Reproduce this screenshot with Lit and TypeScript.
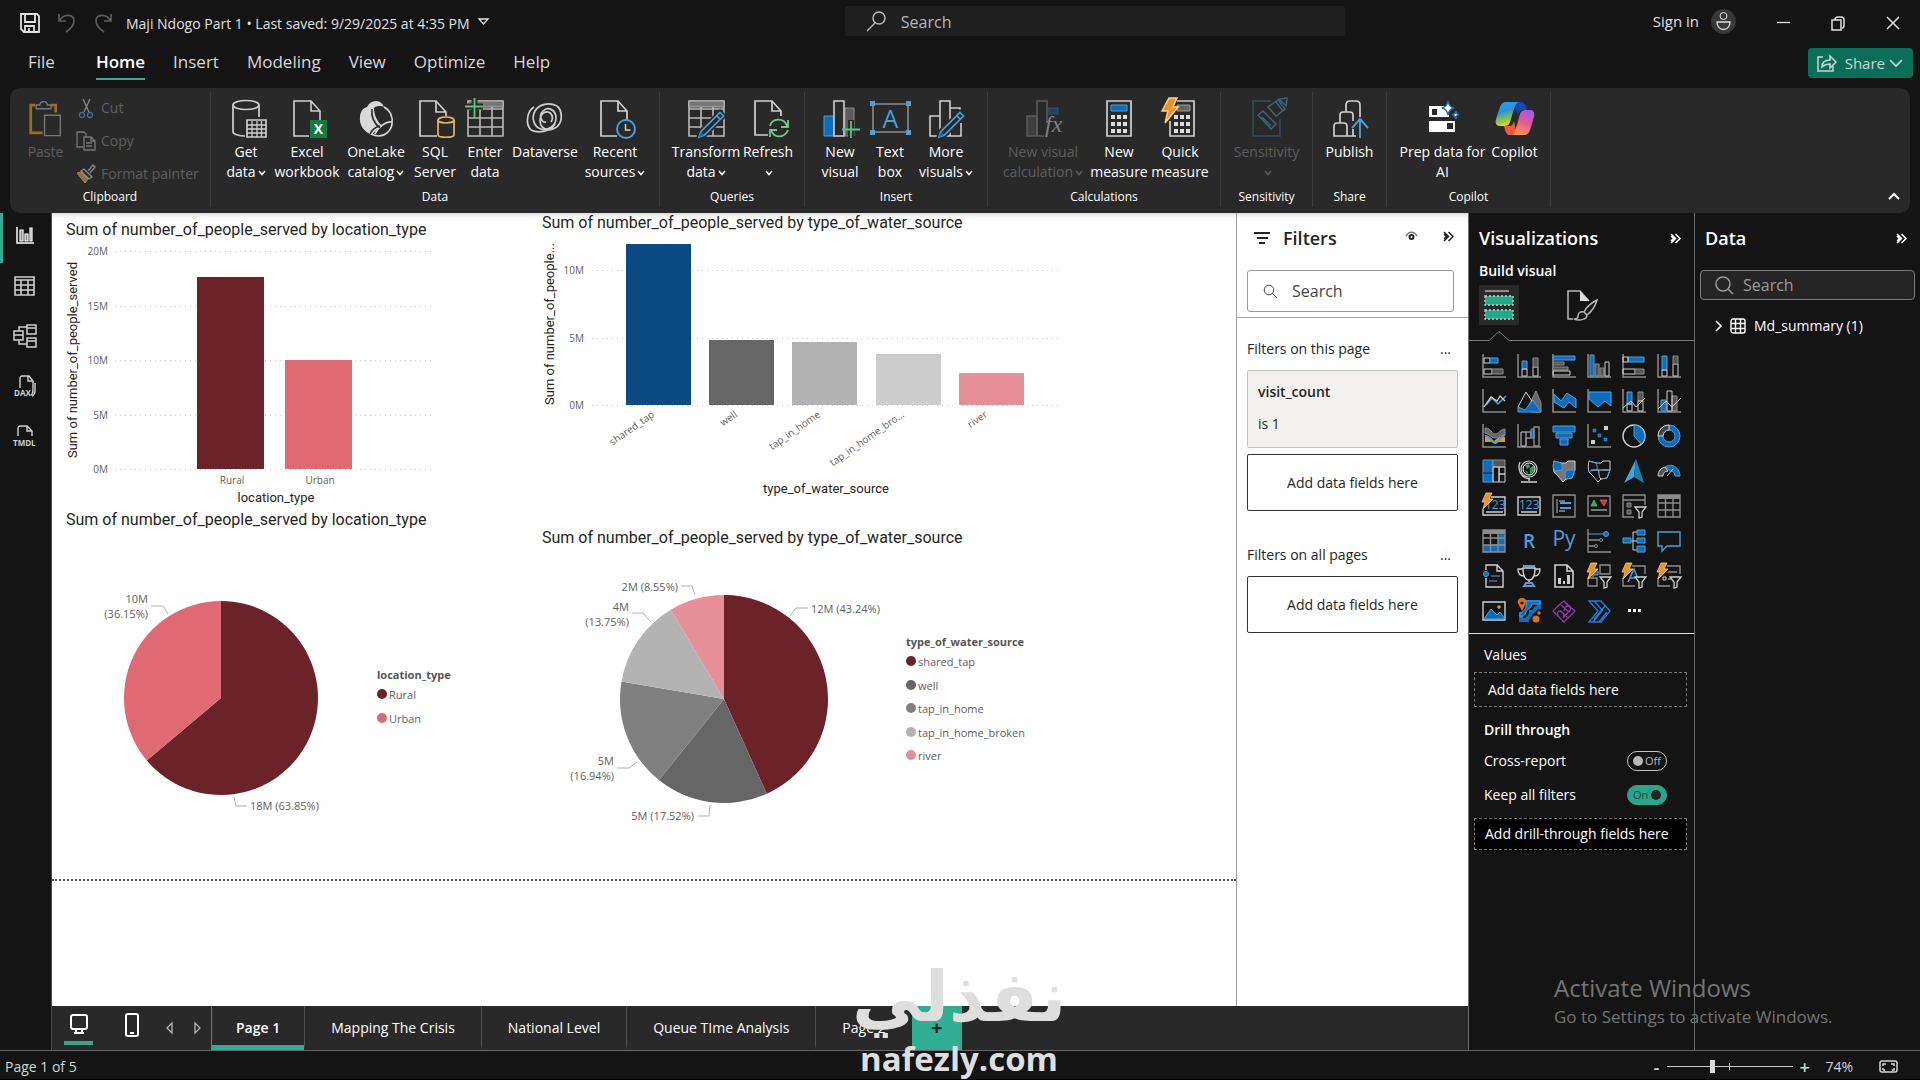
import { LitElement, html, svg, css, TemplateResult, SVGTemplateResult } from "lit";
import { customElement, state } from "lit/decorators.js";
import { classMap } from "lit/directives/class-map.js";

type Glyph = SVGTemplateResult;

const icon = (g: Glyph, w: number, h: number, vb = `0 0 ${w} ${h}`): TemplateResult =>
  html`<svg class="icon" width=${w} height=${h} viewBox=${vb} fill="none" stroke="currentColor" aria-hidden="true">${g}</svg>`;

/* ---------- small interface glyphs ---------- */
const chevronDown = html`<svg class="chev" width="8" height="6" viewBox="0 0 8 6" fill="none" stroke="currentColor" stroke-width="1.5" aria-hidden="true"><path d="M1 1l3 3.5L7 1" /></svg>`;
const doubleChevron = svg`<path stroke-width="1.5" d="M1 1l4.500 4.500L1 10M5.500 1L10 5.500 5.500 10M1 3l2.500 2.500L1 8" />`;
const lens = svg`<circle cx="6" cy="6" r="4.8" /><path d="M9.5 9.5l4.5 4.5" />`;

/* ---------- ribbon glyphs, 40 x 42 ---------- */
const page = svg`<path stroke="#cfcfcf" stroke-width="1.6" d="M22 39H7V4h17l9 10v10M24 4v10h9" />`;
const grid = svg`<path stroke="#b8b8b8" stroke-width="1.6" d="M3 12h35M3 21h35M3 30h35M15 4v35M27 4v35M3 4h35v35H3z" /><path fill="#777" stroke="#b8b8b8" d="M3 4h35v6H3z" />`;
const pencil = svg`<path fill="#292929" stroke="#292929" stroke-width="5" d="M34 15.500l3.500 3.500-19 19-5.500 2 2-5.500z" /><path fill="#292929" stroke="#4a9fdc" stroke-width="1.7" d="M34 15.500l3.500 3.500-19 19-5.500 2 2-5.500zM31 19l3.500 3.500" /><path fill="#0f6cbd" stroke="none" d="M15 35l3 3-5.500 2.500z" />`;

const ribbonGlyphs: Record<string, Glyph> = {
  paste: svg`<path stroke="#96701f" stroke-width="3" d="M10 7H5v30h13M27 7h5v8" /><path stroke="#777" stroke-width="1.500" d="M11 11V7h4c0-5 8-5 8 0h4v4zM20 18h17v22H20z" />`,
  getData: svg`<g stroke="#cfcfcf" stroke-width="1.7"><ellipse cx="20" cy="8" rx="13" ry="4.500" /><path d="M7 8v27c0 2 6 4 12 4M33 8v12" /><path fill="#292929" d="M21 23h19v17H21z" /><path stroke-width="1.300" d="M21 28h19M21 32h19M21 36h19M26 24v16M31 24v16M35.500 24v16" /></g>`,
  excel: svg`${page}<path fill="#107c41" stroke="none" d="M23 23h17v18H23z" /><text x="31.500" y="37" text-anchor="middle" font-size="14" font-weight="700" fill="#fff" stroke="none">X</text>`,
  oneLake: svg`<path fill="#d8d8d8" stroke="none" d="M20 4c4 0 7 3 8 6-3-2-9-1-10 1 0 7 3 13 8 18-5 3-9 7-10 9C8 35 3 28 4 20c0-5 3-9 7-10 2-4 5-6 9-6z" /><path stroke="#d8d8d8" stroke-width="1.700" d="M28 10c7 4 9 11 8 17-1 7-7 12-13 12-3 0-6-1-8-2M36 25c-6-1-14 5-17 12" /><path stroke="#292929" stroke-width="1.600" d="M16 12c-1 8 3 15 8 19M14 37c2-4 5-7 10-8" />`,
  sql: svg`<path stroke="#cfcfcf" stroke-width="1.7" d="M22 39H5V4h16l10 11v4M21 4v11h10" /><g stroke="#e8b55e" fill="#292929" stroke-width="1.700"><path d="M23 23v15c0 3 16 3 16 0V23" /><ellipse cx="31" cy="23" rx="8" ry="3" /></g>`,
  enter: svg`${grid}<path stroke="#292929" stroke-width="6" d="M9.500 0v20M0 9.500h18" /><path stroke="#5fc27d" stroke-width="1.800" d="M9.500 1v20M0 9.500h19" />`,
  dataverse: svg`<g stroke="#cfcfcf" stroke-width="1.700"><path d="M32 9C24 5 14 7 10 14s-1 16 6 18 15-3 15-11-8-12-13-7-1 12 3 11" /><path d="M6 33c8 4 20 1 24-6M32 9c6 5 6 18-2 22-7 4-15 1-15-8 0-5 4-9 8-8s6 6 3 10M6 33C0 27 2 14 9 10" /></g>`,
  recent: svg`<path stroke="#cfcfcf" stroke-width="1.7" d="M22 39H6V4h17l9 10v9M23 4v10h9" /><circle cx="31" cy="32" r="9" fill="#292929" stroke="#4a9fdc" stroke-width="1.900" /><path stroke="#cfcfcf" stroke-width="1.500" d="M30.500 27v6h5" />`,
  transform: svg`${grid}${pencil}`,
  refresh: svg`<path stroke="#cfcfcf" stroke-width="1.7" d="M20 38H7V4h17l9 10v5M24 4v10h9" /><g stroke="#6bcb84" stroke-width="1.800"><path d="M22 29c2-8 14-9 17 0M40 23v7h-7M40 33c-3 8-14 9-17 0M22 40v-7h7" /></g>`,
  newVisual: svg`<path fill="#0f6cbd" stroke="#4a9fdc" d="M4 19h10v20H4z" /><path fill="#5c5c5c" stroke="#8a8a8a" d="M25 11h9v28h-9z" /><path fill="#292929" stroke="#cfcfcf" stroke-width="1.600" d="M14 4h10v35H14z" /><path stroke="#292929" stroke-width="6" d="M31 23v17" /><path stroke="#5fc27d" stroke-width="1.800" d="M31 24v17M22 32.500h18" />`,
  textBox: svg`<path stroke="#8a8a8a" stroke-width="1.600" d="M3 7h35v28H3z" /><path fill="#4a9fdc" stroke="none" d="M0 4h5v5H0zM36 4h5v5h-5zM0 33h5v5H0zM36 33h5v5h-5z" /><text x="20.500" y="31" text-anchor="middle" font-size="25" fill="#4a9fdc" stroke="none">A</text>`,
  moreVisuals: svg`<path stroke="#cfcfcf" stroke-width="1.600" d="M14 39V4h10v35zM14 19H4v20h31V26M24 11h10v8" />${pencil}`,
  visualCalc: svg`<path fill="#404040" stroke="#5c5c5c" stroke-width="1.500" d="M4 19h10v20H4z" /><path stroke="#5c5c5c" stroke-width="1.500" d="M14 39V4h10v22M14 39h7" /><path fill="#24435c" stroke="#2e526d" d="M25 11h10v6H25z" /><text x="22" y="35" font-family="Liberation Serif" font-style="italic" font-size="24" fill="#828282" stroke="none">fx</text>`,
  measure: svg`<path stroke="#cfcfcf" stroke-width="1.700" d="M8 4h24v35H8z" /><path fill="#0f6cbd" stroke="#4a9fdc" d="M12 8h16v6H12z" /><path fill="#ddd" stroke="none" d="M12 18h4v4h-4zM18 18h4v4h-4zM24 18h4v4h-4zM12 25h4v4h-4zM18 25h4v4h-4zM24 25h4v4h-4zM12 32h4v4h-4zM18 32h4v4h-4zM24 32h4v4h-4z" />`,
  quick: svg`<path stroke="#cfcfcf" stroke-width="1.700" d="M17 4h17v35H10V24" /><path fill="#666" stroke="#999" d="M17 8h13v6H17z" /><path fill="#ddd" stroke="none" d="M14 18h4v4h-4zM20 18h4v4h-4zM26 18h4v4h-4zM14 25h4v4h-4zM20 25h4v4h-4zM26 25h4v4h-4zM14 32h4v4h-4zM20 32h4v4h-4zM26 32h4v4h-4z" /><path fill="#e8912d" stroke="#ffd27a" stroke-width="1.500" d="M9 1h8l-4 9h5L5 26l3-12H2z" />`,
  sensitivity: svg`<path stroke="#2f4f60" stroke-width="1.600" d="M24 4H6v35h27V22" /><g stroke="#3f6478" stroke-width="1.500"><path d="M11 18l5-4 13 13-5 5zM15 20l9 9M21 10l8 9 9-7-7-9zM29 5l7 9M32 2l7 7 1-8z" /></g>`,
  publish: svg`<path stroke="#cfcfcf" stroke-width="1.700" d="M16 15V8c0-3 2-4 4-4h6c2 0 4 1 4 4v12M10 26v-8c0-2 1-3 3-3h7c2 0 3 1 3 3v6M4 39V29c0-2 1-3 3-3h7c2 0 3 1 3 3v10zM4 39h22M23 32v7" /><path stroke="#4a9fdc" stroke-width="1.900" d="M30 41V22M22 31l8-9 8 9" />`,
  prep: svg`<path fill="#fff" stroke="none" d="M6 9h20v11H6zM6 24h26v11H6z" /><path fill="#292929" stroke="none" d="M9 12h5v6H9zM24 26h6v6h-6z" /><path fill="#fff" stroke="#1f6ea8" stroke-width="1.500" d="M25 4c1 4 2 6 6 7-4 1-5 3-6 7-1-4-2-6-6-7 4-1 5-3 6-7zM33 14c0 2 1 3 3 4-2 0-3 1-3 4-1-3-2-4-4-4 3-1 4-2 4-4z" />`,
  copilot: svg`<defs>
      <linearGradient id="cpA" x1="0" y1="0" x2="0.300" y2="1"><stop offset="0" stop-color="#19a7ee" /><stop offset="0.450" stop-color="#2f8fe0" /><stop offset="0.750" stop-color="#7cc14a" /><stop offset="1" stop-color="#f3cf2e" /></linearGradient>
      <linearGradient id="cpB" x1="0.700" y1="0" x2="0.300" y2="1"><stop offset="0" stop-color="#a05be8" /><stop offset="0.450" stop-color="#e0559c" /><stop offset="1" stop-color="#ff9b4a" /></linearGradient>
    </defs>
    <path fill="#1646b8" stroke="none" d="M18 5h8c3 0 4 2 5 5l1 3h-4c-3 0-4 2-5 5z" />
    <path fill="#ef5a3c" stroke="none" d="M22 38h-7c-3 0-4-2-5-5l-1-4h5c3 0 4-2 5-5z" />
    <path fill="url(#cpA)" stroke="none" d="M11 5h13c-3 1-4 4-5 7l-4 13c-1 3-3 4-6 4H5c-4 0-5-3-4-7L5 10c1-3 3-5 6-5z" />
    <path fill="url(#cpB)" stroke="none" d="M29 38H17c3-1 3-4 4-7l4-14c1-3 3-4 6-4h4c4 0 5 3 4 7l-4 13c-1 3-3 5-6 5z" />`,
};

interface RibbonItem { glyph: string; lines: string[]; drop?: boolean; off?: boolean; }
interface RibbonGroup { name: string; kind: string; items: RibbonItem[]; }

const ribbon: RibbonGroup[] = [
  { name: "Data", kind: "data", items: [
    { glyph: "getData", lines: ["Get", "data"], drop: true },
    { glyph: "excel", lines: ["Excel", "workbook"] },
    { glyph: "oneLake", lines: ["OneLake", "catalog"], drop: true },
    { glyph: "sql", lines: ["SQL", "Server"] },
    { glyph: "enter", lines: ["Enter", "data"] },
    { glyph: "dataverse", lines: ["Dataverse"] },
    { glyph: "recent", lines: ["Recent", "sources"], drop: true } ] },
  { name: "Queries", kind: "queries", items: [
    { glyph: "transform", lines: ["Transform", "data"], drop: true },
    { glyph: "refresh", lines: ["Refresh", ""], drop: true } ] },
  { name: "Insert", kind: "insert", items: [
    { glyph: "newVisual", lines: ["New", "visual"] },
    { glyph: "textBox", lines: ["Text", "box"] },
    { glyph: "moreVisuals", lines: ["More", "visuals"], drop: true } ] },
  { name: "Calculations", kind: "calc", items: [
    { glyph: "visualCalc", lines: ["New visual", "calculation"], drop: true, off: true },
    { glyph: "measure", lines: ["New", "measure"] },
    { glyph: "quick", lines: ["Quick", "measure"] } ] },
  { name: "Sensitivity", kind: "sens", items: [
    { glyph: "sensitivity", lines: ["Sensitivity", ""], drop: true, off: true } ] },
  { name: "Share", kind: "share", items: [{ glyph: "publish", lines: ["Publish"] }] },
  { name: "Copilot", kind: "copilot", items: [
    { glyph: "prep", lines: ["Prep data for", "AI"] },
    { glyph: "copilot", lines: ["Copilot"] } ] },
];

/* ---------- visual gallery glyphs, 24 x 24 ---------- */
const G = "#8c8c8c", W = "#cfcfcf", B = "#0f6cbd", L = "#4a9fdc", O = "#e8912d";
const axes = svg`<path stroke=${G} stroke-width="1.500" d="M1 0v23h23" />`;
const bolt = svg`<path fill=${O} stroke="#ffd27a" stroke-width="0.800" d="M4 -1h6L7 5h4L1 15l2-7H0z" />`;
const funnelMark = svg`<path fill="#141414" stroke=${W} stroke-width="1.300" d="M13 13h11l-4 5v5l-3 1v-6z" />`;
const tableFrame = svg`<path stroke=${G} stroke-width="1.400" d="M1 1h22v22H1zM1 9h22M1 16h22M8.500 5v18M16 5v18" /><path fill=${G} stroke="none" d="M1 1h22v4H1z" />`;

const gallery: [string, Glyph][] = [
  ["Stacked bar chart", svg`${axes}<path stroke=${W} d="M2 4h6v5H2zM2 15h8v5H2z" /><path fill=${B} stroke=${L} d="M8 4h8v5H8z" /><path fill="#555" stroke=${G} d="M10 15h11v5H10z" />`],
  ["Stacked column chart", svg`${axes}<path fill=${B} stroke=${L} d="M5 7h5v8H5z" /><path stroke=${W} d="M5 15h5v7H5zM16 13h5v9h-5z" /><path fill="#555" stroke=${G} d="M16 4h5v9h-5z" />`],
  ["Clustered bar chart", svg`${axes}<path fill=${B} stroke=${L} d="M1 2h22v4H1z" /><path fill="#555" stroke=${G} d="M1 8h11v3H1zM1 13h15v3H1z" /><path stroke=${W} d="M1 17h17v4H1z" />`],
  ["Clustered column chart", svg`${axes}<path fill=${B} stroke=${L} d="M3 1h4v21H3z" /><path fill="#555" stroke=${G} d="M8 10h4v12H8zM13 14h4v8h-4z" /><path stroke=${W} d="M18 8h4v14h-4z" />`],
  ["100% stacked bar chart", svg`${axes}<path fill=${B} stroke=${L} d="M6 3h16v5H6z" /><path stroke=${W} d="M1 3h5v5H1zM1 15h12v5H1z" /><path fill="#555" stroke=${G} d="M13 15h9v5h-9z" />`],
  ["100% stacked column chart", svg`${axes}<path fill=${B} stroke=${L} d="M5 2h5v14H5z" /><path stroke=${W} d="M5 16h5v6H5zM16 10h5v12h-5z" /><path fill="#555" stroke=${G} d="M16 2h5v8h-5z" />`],
  ["Line chart", svg`${axes}<path stroke=${L} stroke-width="1.500" d="M4 16l6-7 6 6 8-8" /><path stroke=${W} stroke-width="1.300" d="M2 18l7-10 6 4 3-5 5 5" />`],
  ["Area chart", svg`<path fill="#666" stroke=${G} d="M12 16l7-14 5 12v9H14z" /><path stroke=${W} d="M1 18L9 3l9 14" /><path fill=${B} stroke=${L} d="M1 23v-5l7 3 8-10 8 12z" />`],
  ["Stacked area chart", svg`${axes}<path fill=${B} stroke=${L} d="M2 5l7 7 6-8 9 6v9l-7-6-5 6-10-6z" />`],
  ["100% stacked area chart", svg`${axes}<path fill=${B} stroke=${L} d="M2 3h22v14l-6-5-7 6-9-8z" />`],
  ["Line and stacked column chart", svg`${axes}<path fill=${B} stroke=${L} d="M5 3h5v12H5z" /><path fill="#555" stroke=${G} d="M16 3h5v9h-5z" /><path stroke=${W} d="M5 15h5v7H5zM16 12h5v10h-5zM1 19l8-7 5 6 9-9" />`],
  ["Line and clustered column chart", svg`${axes}<path fill=${B} stroke=${L} d="M4 11h5v11H4z" /><path fill="#555" stroke=${G} d="M15 7h5v15h-5z" /><path stroke=${W} d="M10 2h5v20h-5zM1 20l8-8 6 6 9-9" />`],
  ["Ribbon chart", svg`${axes}<path fill="#666" stroke=${G} d="M3 4c7 0 6 6 10 6s4-4 10-5v6c-6 0-6 3-10 3S8 10 3 9z" /><path fill=${O} stroke="none" d="M3 13h5l4 4 5-4h6v5H3z" /><path stroke=${L} stroke-width="2" d="M3 12c6 0 6 7 10 7s5-7 10-8" />`],
  ["Waterfall chart", svg`${axes}<path stroke=${W} d="M4 8h5v14H4z" /><path fill=${B} stroke=${L} d="M14 5h3v9h-3z" /><path stroke=${G} stroke-width="1.400" d="M9 8h5v6H9v8M17 3h5v19h-5z" />`],
  ["Funnel", svg`<path fill=${B} stroke=${L} d="M1 2h22v6H1zM4 9h16v5H4zM8 15h8v6H8z" />`],
  ["Scatter chart", svg`${axes}<path fill=${W} stroke="none" d="M17 2h4v4h-4zM4 16h4v4H4z" /><path fill=${B} stroke=${L} stroke-width="0.500" d="M6 5h3v3H6zM11 10h3v3h-3zM17 14h3v3h-3z" />`],
  ["Pie chart", svg`<circle cx="12" cy="12" r="11" stroke=${W} stroke-width="1.400" /><path fill=${B} stroke=${L} d="M12 1a11 11 0 0 1 7 19l-7-8z" />`],
  ["Donut chart", svg`<circle cx="12" cy="12" r="8.500" stroke=${B} stroke-width="5" /><circle cx="12" cy="12" r="11" stroke=${L} /><circle cx="12" cy="12" r="6" stroke=${L} /><path fill="#444" stroke=${W} d="M1 12A11 11 0 0 1 12 1v5a6 6 0 0 0-6 6z" />`],
  ["Treemap", svg`<path fill=${B} stroke=${L} d="M1 1h10v22H1z" /><path stroke="#141414" d="M1 14h10" /><path fill="#555" stroke=${G} d="M11 1h12v7H11z" /><path stroke=${W} d="M11 8h6v15h-6zM17 8h6v7h-6zM17 15h6v8h-6z" />`],
  ["Map", svg`<circle cx="12" cy="10" r="8" stroke=${W} stroke-width="1.200" /><circle cx="12" cy="10" r="6" fill="#111" /><path fill="#2c9b5c" stroke="none" d="M8 6l4-1 1 3-3 2zM13 9l4-3v7l-4 2zM8 11l3 2-1 3z" /><path stroke=${W} stroke-width="1.300" d="M3 3C0 11 4 19 13 20M12 19v3M4 23h16" />`],
  ["Filled map", svg`<path fill="#777" stroke=${W} d="M2 2l7 2h5l2-2h7v9l-3 8-6 1-3 3-5-6-4-4c-1-4-1-7 0-11z" /><path fill=${B} stroke=${L} d="M2 2l7 2c0 2 2 3 1 7l-7 1c-2-3-2-6-1-10zM15 11h8l-3 8-6 1c-2-1 1-4-1-6z" />`],
  ["Shape map", svg`<path stroke=${W} d="M2 2l7 2h5l2-2h7v9l-3 8-6 1-3 3-5-6-4-4c-1-4-1-7 0-11zM4 11h19M11 11c2 3 0 6 3 9" /><path stroke=${L} d="M2 2l7 2c0 2 2 3 1 7l-7 1M15 11h8l-3 8-6 1" />`],
  ["Azure map", svg`<path fill="#3ea8d8" stroke="none" d="M14 0L2 24l10-6z" /><path fill="#1b7fb3" stroke="none" d="M14 0l8 24-10-6z" />`],
  ["Gauge", svg`<path fill=${B} stroke=${L} d="M8 8c8-5 15 2 15 9h-5c0-3-2-5-5-5z" /><path fill="#555" stroke=${W} d="M1 17C1 12 4 9 8 8l3 4c-3 0-5 2-5 5zM10 17l6-7" />`],
  ["Card (new)", svg`<path stroke=${W} stroke-width="1.400" d="M9 3h14v18H1v-6M4 18h17" /><text x="3" y="15" font-size="12" fill=${L} stroke="none">123</text>${bolt}`],
  ["Card", svg`<path stroke=${W} stroke-width="1.400" d="M1 3h22v18H1zM4 18h16" /><text x="2" y="15" font-size="12" fill=${L} stroke="none">123</text>`],
  ["Multi-row card", svg`<path stroke=${G} stroke-width="1.400" d="M1 1h22v22H1zM5 5v14M7 17h6M7 7h6" /><path stroke=${L} stroke-width="1.800" d="M8 9h11M8 14h11" />`],
  ["KPI", svg`<path stroke=${G} stroke-width="1.400" d="M1 2h22v20H1z" /><path fill="#2fae62" stroke="#6bcb84" stroke-width="0.600" d="M4 12l3-6 3 6z" /><path fill="#d13438" stroke="#f07070" stroke-width="0.600" d="M13 6h7l-3 6z" /><path stroke="#777" stroke-width="2" d="M4 16h16" />`],
  ["Slicer", svg`<path stroke=${G} stroke-width="1.400" d="M12 23H1V1h22v10M1 6h22" /><path fill="#555" stroke=${G} d="M5 9h4v4H5zM5 16h4v4H5z" />${funnelMark}`],
  ["Table", tableFrame],
  ["Matrix", svg`<path fill=${B} stroke="none" d="M16 5h7v18H1v-7h15z" /><path stroke=${L} d="M8.500 16h15M16 9h7" />${tableFrame}`],
  ["R script visual", svg`<text x="12" y="19" text-anchor="middle" font-size="19" font-weight="600" fill=${L} stroke="none">R</text>`],
  ["Python visual", svg`<text x="12" y="17" text-anchor="middle" font-size="21" font-weight="500" fill=${L} stroke="none">Py</text>`],
  ["Key influencers", svg`<path stroke=${G} stroke-width="1.400" d="M1 0v23h23M1 11h11M1 17h7" /><path stroke=${L} d="M1 5h15" /><circle cx="19" cy="5" r="2.500" fill=${B} stroke=${L} /><circle cx="14" cy="11" r="1.500" stroke=${G} /><circle cx="9" cy="17" r="1.500" stroke=${G} />`],
  ["Decomposition tree", svg`<path stroke=${W} d="M8 12h7M11 3v18M11 3h4M11 21h4" /><path fill=${B} stroke=${L} d="M1 9h8v5H1zM15 1h8v5h-8zM15 9h8v5h-8zM15 17h8v6h-8z" />`],
  ["Q&A", svg`<path stroke=${L} stroke-width="1.400" d="M1 3h22v14H10l-5 5v-5H1z" />`],
  ["Narrative", svg`<path stroke=${W} stroke-width="1.400" d="M4 6V1h11l6 6v16H4v-9M15 1v6h6" /><circle cx="4" cy="10" r="2.500" stroke=${L} fill=${B} /><path stroke=${L} d="M9 12h9M7 17h8" />`],
  ["Metrics", svg`<path stroke=${W} stroke-width="1.400" d="M6 4h12c0 8-2 12-6 12S6 12 6 4zM6 5H1c0 5 2 7 6 7M18 5h5c0 5-2 7-6 7M12 16v3" /><path stroke=${L} stroke-width="2" d="M6 2h12M7 22h10l-2-3H9z" />`],
  ["Paginated report", svg`<path stroke=${W} stroke-width="1.600" d="M3 1h12l6 6v16H3zM15 1v6h6" /><path fill=${W} stroke="none" d="M6 14h3v6H6zM11 17h2v3h-2zM15 11h3v9h-3z" />`],
  ["Button slicer", svg`<path stroke=${G} stroke-width="1.400" d="M13 1h10v9H13zM1 14v8h9v-8zM10 10h-4v3" /><path fill=${B} stroke=${L} d="M7 7h4v4H7z" />${bolt}${funnelMark}`],
  ["Text slicer", svg`<path stroke=${G} stroke-width="1.400" d="M10 2h13v8M1 14v8h12" /><path stroke=${L} stroke-width="1.500" d="M6 18l6-13 5 12M8 14h5" />${bolt}${funnelMark}`],
  ["List slicer", svg`<path stroke=${G} stroke-width="1.400" d="M10 2h13v8M1 14v8h12M11 8h9M11 15h3" /><path stroke=${W} d="M6 13h3v3H6z" />${bolt}${funnelMark}`],
  ["Image", svg`<path stroke=${W} stroke-width="1.400" d="M1 3h22v18H1z" /><path fill=${B} stroke=${L} d="M2 20l7-10 6 6 3-3 5 7z" /><circle cx="17" cy="8" r="1.800" fill=${O} stroke="none" />`],
  ["ArcGIS map", svg`<path fill="#141414" stroke=${B} stroke-width="4" d="M9 3h13v5c-5 0-3 5-8 5 0 5-3 4-4 8H4v-8" /><path fill=${B} stroke=${L} d="M9 2h14v3h-8c-1 5-4 4-6 8-1 4-3 4-6 5v-4c3-1 6-4 6-6z" /><path fill="#e07010" stroke="none" d="M5-1c3 0 5 2 4 5l-4 8-4-8c-1-3 1-5 4-5z" /><circle cx="5" cy="4" r="1.600" fill="#141414" stroke="none" /><circle cx="19" cy="20" r="3.500" fill="#e07010" stroke="none" /><circle cx="22" cy="14" r="1.800" fill="#e07010" stroke="none" />`],
  ["Power Apps", svg`<path stroke="#8b3aa0" stroke-width="1.300" d="M8 5l4-3 11 10-7 7-4 4L1 12zM8 5l9 8c3-3 1-6-1-6s-4 2-4 5M7 18c-3-3-1-6 1-6s4 3 4 6l5-6M12 23l4-4-5-5M16 7l-4-5" />`],
  ["Power Automate", svg`<path stroke="#1f7ad6" stroke-width="1.400" d="M2 2h12l9 10-9 11H2l9-11zM7 2l9 10M6 23l9-11M18 7L7 20M12 23l8-10" />`],
  ["Get more visuals", svg`<path fill="#fff" stroke="none" d="M6 10h3v3H6zM11 10h3v3h-3zM16 10h3v3h-3z" />`],
];

/* ---------- report data ---------- */
const locationBars = [
  { name: "Rural", value: 17.65, fill: "#6b2229" },
  { name: "Urban", value: 10.01, fill: "#e06a74" },
];
const sourceBars = [
  { name: "shared_tap", value: 11.95, fill: "#0b4a82" },
  { name: "well", value: 4.85, fill: "#666666" },
  { name: "tap_in_home", value: 4.68, fill: "#b3b3b3" },
  { name: "tap_in_home_bro...", value: 3.8, fill: "#cccccc" },
  { name: "river", value: 2.37, fill: "#e68f96" },
];
interface Slice { share: number; fill: string; }
const locationSlices: Slice[] = [
  { share: 0.6385, fill: "#6b2229" },
  { share: 0.3615, fill: "#e06a74" },
];
const sourceSlices: Slice[] = [
  { share: 0.4324, fill: "#6b2229" },
  { share: 0.1752, fill: "#666666" },
  { share: 0.1694, fill: "#808080" },
  { share: 0.1375, fill: "#b3b3b3" },
  { share: 0.0855, fill: "#e68f96" },
];

function pie(cx: number, cy: number, r: number, slices: Slice[]) {
  let at = 0;
  return slices.map((s) => {
    const a = at * 2 * Math.PI;
    at += s.share;
    const b = at * 2 * Math.PI;
    const big = s.share > 0.5 ? 1 : 0;
    const d = `M${cx} ${cy}L${cx + r * Math.sin(a)} ${cy - r * Math.cos(a)}A${r} ${r} 0 ${big} 1 ${cx + r * Math.sin(b)} ${cy - r * Math.cos(b)}Z`;
    return svg`<path d=${d} fill=${s.fill} />`;
  });
}

const legend = (x: number, y: number, title: string, rows: [string, string][]) => svg`
  <text class="legend-title" x=${x} y=${y}>${title}</text>
  ${rows.map(([name, fill], i) => svg`
    <circle cx=${x + 5} cy=${Math.round(y + 15 + i * 23.5)} r="5" fill=${fill} />
    <text class="legend" x=${x + 12} y=${Math.round(y + 20 + i * 23.5)}>${name}</text>`)}`;

@customElement("app-root")
export class AppRoot extends LitElement {
  @state() private menu = "Home";
  @state() private current = "Page 1";

  static styles = css`
    :host {
      display: flex;
      flex-direction: column;
      min-height: 100vh;
      position: relative;
      overflow: hidden;
      background: #141414;
      color: #fff;
      font-family: "Open Sans", "Noto Sans", sans-serif;
      font-size: 14px;
      line-height: 20px;
    }
    * { box-sizing: border-box; }
    button, input { font: inherit; color: inherit; }
    button { background: none; border: 0; padding: 0; margin: 0; }
    h2, h3, p, figure, ul { margin: 0; padding: 0; }
    h2 { font-size: 18px; line-height: 24px; font-weight: 600; }
    h3 { font-size: 14px; line-height: 20px; font-weight: 600; }
    .icon { display: block; overflow: visible; flex: none; }
    input::placeholder { color: inherit; opacity: 1; }

    .titlebar { display: grid; grid-template-columns: 44% 500px 1fr; height: 42px; color: #e0e0e0; }
    .quick { display: flex; align-items: center; padding: 4px 0 0 20px; gap: 18px; }
    .quick .dim { color: #5e5e5e; }
    .doc { display: flex; align-items: center; gap: 8px; margin-left: -4px; padding-top: 2px; }
    .top-search { display: flex; align-items: center; gap: 15px; margin: 6px 0; padding-left: 21px; background: #1f1f1f; border-radius: 2px; font-size: 16px; color: #b8b8b8; }
    .top-search input { flex: 1; min-width: 0; border: 0; background: none; outline: 0; padding: 2px 0 0; }
    .window { display: flex; justify-content: flex-end; align-items: center; padding-right: 20px; }
    .signin { display: flex; align-items: center; gap: 12px; margin-right: 41px; font-size: 15px; }
    .controls { display: flex; gap: 41px; padding-top: 3px; }

    .menubar { display: flex; height: 46px; padding: 0 7px 0 28px; align-items: flex-start; }
    .menubar nav { display: flex; gap: 28px; flex: 1; }
    .menu { height: 38px; font-size: 17px; color: #d8d8d8; padding: 4px 0 0; border-bottom: 2px solid transparent; }
    .menu:first-child { margin-right: 13px; }
    .menu.on { color: #fff; font-weight: 600; border-color: #2fae93; }
    .share { display: flex; align-items: center; height: 30px; margin-top: 6px; padding: 0 10px 0 9px; gap: 4px; background: #0b6e59; border-radius: 4px; color: #c9d6d2; font-size: 15px; }
    .share span { padding-left: 5px; }

    .ribbon { display: flex; position: relative; margin: 0 10px; height: 125px; background: #292929; border-radius: 10px; }
    .group { display: flex; flex-direction: column; justify-content: space-between; align-items: center; margin: 4px 0 6px; border-right: 1px solid #3d3d3d; flex: none; }
    .group-name { font-size: 12px; line-height: 20px; font-weight: 400; }
    .items { display: grid; justify-content: center; padding-top: 5px; }
    .group.clip { width: 201px; }
    .group.data { width: 449px; }
    .group.queries { width: 145px; }
    .group.insert { width: 183px; }
    .group.calc { width: 233px; }
    .group.sens { width: 92px; }
    .group.share-g { width: 74px; }
    .group.copilot { width: 164px; }
    .data .items { grid-template-columns: 48px 74px 64px 54px 46px 74px 66px; }
    .queries .items { grid-template-columns: 72px 52px; }
    .insert .items { grid-template-columns: 50px 50px 62px; }
    .calc .items { grid-template-columns: 92px 60px 62px; }
    .sens .items { grid-template-columns: 76px; }
    .share-g .items { grid-template-columns: 56px; }
    .copilot .items { grid-template-columns: 92px 52px; }
    .tool { display: flex; flex-direction: column; align-items: center; white-space: nowrap; }
    .tool .icon { margin-bottom: 3px; }
    .tool.off { color: #5e5e5e; }
    .tool .chev { margin-left: 2px; vertical-align: 1px; }
    .clip-body { display: flex; width: 100%; padding: 5px 0 0 17px; gap: 12px; color: #5e5e5e; }
    .clip-list { display: flex; flex-direction: column; gap: 13px; padding-top: 1px; }
    .clip-list button { display: flex; align-items: center; gap: 5px; white-space: nowrap; }
    .collapse { position: absolute; right: 10px; bottom: 13px; }

    .work { display: flex; flex: 1; min-height: 0; }
    .rail { width: 51px; display: flex; flex-direction: column; flex: none; color: #cfcfcf; }
    .rail button { height: 50px; display: grid; place-items: center; border-left: 3px solid transparent; padding: 0 5px 4px 0; }
    .rail button.on { border-color: #2fae93; color: #fff; }
    .center { flex: 1; min-width: 0; display: flex; flex-direction: column; border-left: 1px solid #4a4a4a; }
    .stage { flex: 1; display: flex; background: #fff; color: #252423; }
    .canvas { flex: 1; min-width: 0; position: relative; overflow: hidden; min-height: 792px; box-shadow: inset 0 6px 5px -5px #c8c8c8; }
    .canvas figure { position: absolute; }
    .canvas svg { display: block; }
    .v1 { left: 8px; top: 7px; }
    .v2 { left: 484px; top: 0; }
    .v3 { left: 8px; top: 297px; }
    .v4 { left: 484px; top: 315px; }
    figcaption { padding-left: 6px; font-family: Roboto, sans-serif; font-size: 16px; line-height: 20px; white-space: nowrap; }
    .page-edge { position: absolute; left: 0; right: 0; top: 666px; border-top: 2px dotted #555; }
    .axis, .label { font-family: "Open Sans", sans-serif; fill: #605e5c; }
    .axis { font-size: 10px; }
    .label, .legend { font-size: 11px; fill: #605e5c; }
    .legend-title { font-size: 11px; font-weight: 700; fill: #555; }
    .axis-title { font-family: Roboto, sans-serif; font-size: 13px; fill: #252423; }
    .end { text-anchor: end; }
    .mid { text-anchor: middle; }
    .gridline { stroke: #c8c8c8; stroke-dasharray: 1 4; }
    .leader { fill: none; stroke: #b0b0b0; }

    .filters { width: 232px; flex: none; border-left: 1px solid #a0a0a0; box-shadow: inset 0 6px 5px -5px #c8c8c8; }
    .filters-head { padding: 13px 14px 0 10px; height: 105px; border-bottom: 1px solid #a0a0a0; }
    .head-row { display: flex; align-items: center; }
    .filters .head-row { padding-left: 7px; gap: 13px; }
    .filters .head-row h2 { flex: 1; }
    .filters .head-row .eye { margin-right: 12px; }
    .filters .head-row button { margin-bottom: 4px; }
    .filter-search { display: flex; align-items: center; gap: 14px; height: 42px; margin-top: 20px; padding-left: 15px; border: 1px solid #999; border-radius: 3px; font-size: 16px; color: #444; }
    .filter-search input { border: 0; outline: 0; width: 130px; padding: 0; background: none; }
    .filter-set { padding: 21px 10px 0; }
    .set-row { display: flex; justify-content: space-between; align-items: flex-start; height: 31px; padding-right: 7px; }
    .card { height: 78px; padding: 11px 10px; display: flex; flex-direction: column; gap: 12px; background: #f3f1ef; border: 1px solid #c4c2c0; border-radius: 2px; margin-bottom: 6px; }
    .drop { width: 100%; height: 57px; border: 1px solid #333; border-radius: 2px; display: grid; place-items: center; margin-bottom: 13px; }

    .pagebar { display: flex; height: 44px; background: #292929; }
    .views { display: flex; width: 159px; align-items: stretch; flex: none; padding-left: 12px; }
    .views button { display: flex; flex-direction: column; align-items: center; padding-top: 8px; }
    .views .desk { width: 30px; border-bottom: 4px solid #3aa58c; margin-bottom: 5px; }
    .views .phone { width: 28px; margin-left: 25px; padding-top: 7px; }
    .views .step { width: 28px; padding-top: 16px; color: #b8b8b8; }
    .views .step.first { margin-left: 10px; }
    .tab { padding: 5px 26px 0; border-left: 1px solid #4f4f4f; border-bottom: 5px solid transparent; }
    .tab.on { padding: 5px 24px 0; border-bottom-color: #2fae93; border-left-color: #777; font-weight: 600; }
    .add { width: 50px; background: #2fae93; color: #292929; font-size: 20px; font-weight: 700; }

    .pane { width: 226px; flex: none; border-left: 1px solid #6e6e6e; display: flex; flex-direction: column; }
    .pane > .head-row { justify-content: space-between; padding: 13px 13px 0 10px; }
    .build { padding: 11px 10px 0; }
    .modes { display: flex; gap: 43px; margin: 4px 0 5px; }
    .modes button { width: 40px; height: 40px; display: grid; place-items: center; }
    .modes .on { background: #292929; }
    .caret { display: block; width: 100%; height: 11px; }
    .gallery { display: grid; grid-template-columns: repeat(6, 24px); gap: 11px; padding: 13px 13px 10px; border-bottom: 1px solid #e0e0e0; }
    .gallery button { height: 24px; }
    .wells { padding: 11px 7px 0 5px; }
    .wells h3, .wells .name, .row { padding-left: 10px; }
    .well { display: block; width: 100%; height: 35px; margin: 7px 0 13px; padding: 0 13px; text-align: left; border: 1px dashed #777; }
    .well.black { background: #000; height: 32px; margin: 6px 0 0; padding: 0 10px; }
    .row { display: flex; justify-content: space-between; align-items: center; padding-right: 20px; height: 34px; }
    h3 + .row { margin-top: 4px; }
    .switch { display: flex; align-items: center; width: 40px; height: 20px; padding: 0 5px; justify-content: space-between; border: 1px solid #c4c4c4; border-radius: 10px; font-size: 11px; color: #b8b8b8; }
    .switch input { appearance: none; width: 10px; height: 10px; margin: 0; border-radius: 5px; background: #b8b8b8; }
    .switch.yes { flex-direction: row-reverse; background: #2aa58b; border-color: #2aa58b; color: #134a40; }
    .switch.yes input { background: #242424; }

    .data-search { display: flex; align-items: center; gap: 9px; margin: 20px 5px 0; height: 30px; padding-left: 14px; border: 1px solid #7e7e7e; border-radius: 4px; background: #242424; font-size: 16px; color: #9a9a9a; }
    .data-search input { border: 0; outline: 0; width: 150px; padding: 0; background: none; }
    .tree { display: flex; align-items: center; gap: 8px; margin: 16px 0 0 20px; text-align: left; }

    .status { display: flex; align-items: center; height: 30px; padding: 2px 22px 0 5px; border-top: 1px solid #666; box-shadow: inset 0 -1px 0 #000; color: #d4d4d4; }
    .status > span:first-child { flex: 1; }
    .zoom { display: flex; align-items: center; gap: 6px; margin-right: 16px; }
    .zoom button { width: 10px; font-size: 18px; font-weight: 600; }
    .zoom input { appearance: none; width: 126px; height: 14px; margin: 0; background: linear-gradient(#c8c8c8, #c8c8c8) 62px 50% / 1px 7px no-repeat, linear-gradient(#c8c8c8, #c8c8c8) 0 50% / 100% 1px no-repeat; }
    .zoom input::-webkit-slider-thumb { appearance: none; width: 5px; height: 13px; background: #d8d8d8; }
    .pct { margin-right: 26px; }

    .activate { position: absolute; left: 1554px; top: 972px; color: #747474; pointer-events: none; font-size: 17px; line-height: 26px; white-space: nowrap; }
    .activate strong { display: block; font-weight: 400; font-size: 24px; line-height: 32px; }
    .mark { position: absolute; left: 852px; top: 955px; width: 214px; text-align: center; color: #dedede; font-family: "DejaVu Sans", sans-serif; font-weight: 700; pointer-events: none; }
    .mark b { display: block; font-size: 70px; line-height: 84px; }
    .mark i { display: block; font-family: "Open Sans", sans-serif; font-style: normal; font-size: 33px; line-height: 40px; }
  `;

  private renderGroup(g: RibbonGroup) {
    return html`<section class="group ${g.kind === "share" ? "share-g" : g.kind}">
      <div class="items">
        ${g.items.map((it) => html`<button class=${classMap({ tool: true, off: !!it.off })}>
          ${icon(ribbonGlyphs[it.glyph], 40, 42)}
          ${it.lines.map((l, i) => html`<span>${l}${it.drop && i === it.lines.length - 1 ? chevronDown : ""}</span>`)}
        </button>`)}
      </div>
      <span class="group-name">${g.name}</span>
    </section>`;
  }

  private renderRibbon() {
    return html`<div class="ribbon">
      <section class="group clip">
        <div class="clip-body">
          <button class="tool off">${icon(ribbonGlyphs.paste, 37, 42, "1 0 40 42")}<span>Paste</span></button>
          <div class="clip-list">
            <button>${icon(svg`<path stroke="#888" stroke-width="1.300" d="M7 1l6 13M14 1L8 14" /><g stroke="#3f6f92" stroke-width="1.300"><circle cx="6" cy="17" r="2.500" /><circle cx="14" cy="17" r="2.500" /></g>`, 20, 20)}Cut</button>
            <button>${icon(svg`<path stroke="#777" stroke-width="1.300" d="M7 16H1V1h7l2 2v3M8 6h7l4 4v9H8zM15 6v4h4M10 12h6M10 15h6" />`, 20, 20)}Copy</button>
            <button>${icon(svg`<path stroke="#888" stroke-width="1.300" d="M12 7l5-6 2 2-5 6M8 5l8 8-3 2-8-8z" /><path fill="#8b7340" stroke="#a08a55" d="M5 8l7 7-3 4L1 9z" />`, 20, 20)}Format painter</button>
          </div>
        </div>
        <span class="group-name">Clipboard</span>
      </section>
      ${ribbon.map((g) => this.renderGroup(g))}
      <button class="collapse" aria-label="Collapse ribbon">${icon(svg`<path stroke-width="2" d="M1 7l5-5 5 5" />`, 12, 8)}</button>
    </div>`;
  }

  private renderCanvas() {
    const y1 = (v: number) => Math.round(469 - v * 10.9);
    const y2 = (v: number) => Math.round(405 - v * 13.47);
    return html`<div class="canvas">
      <figure class="v1">
        <figcaption>Sum of number_of_people_served by location_type</figcaption>
        <svg width="390" height="268" viewBox="60 240 390 268">
          ${[20, 15, 10, 5, 0].map((v) => svg`<path class="gridline" d="M115 ${y1(v) + 0.5}H433" /><text class="axis end" x="108" y=${y1(v) + 4}>${v}M</text>`)}
          ${locationBars.map((b, i) => svg`<rect x=${197 + i * 88} y=${y1(b.value)} width="67" height=${469 - y1(b.value)} fill=${b.fill} /><text class="axis mid" x=${232 + i * 88} y="484">${b.name}</text>`)}
          <text class="axis-title mid" x="276" y="502">location_type</text>
          <text class="axis-title mid" transform="translate(77 360) rotate(-90)">Sum of number_of_people_served</text>
        </svg>
      </figure>
      <figure class="v2">
        <figcaption>Sum of number_of_people_served by type_of_water_source</figcaption>
        <svg width="530" height="270" viewBox="536 233 530 270">
          ${[10, 5, 0].map((v) => svg`<path class="gridline" d="M592 ${y2(v) + 0.5}H1058" /><text class="axis end" x="584" y=${y2(v) + 4}>${v}M</text>`)}
          ${sourceBars.map((b, i) => svg`<rect x=${626 + Math.round(i * 83.2)} y=${y2(b.value)} width="65" height=${405 - y2(b.value)} fill=${b.fill} /><text class="axis end" transform="translate(${655 + Math.round(i * 83.2)} 416) rotate(-35)">${b.name}</text>`)}
          <text class="axis-title mid" x="826" y="493">type_of_water_source</text>
          <text class="axis-title" transform="translate(554 405) rotate(-90)">Sum of number_of_people...</text>
        </svg>
      </figure>
      <figure class="v3">
        <figcaption>Sum of number_of_people_served by location_type</figcaption>
        <svg width="420" height="300" viewBox="60 530 420 300">
          ${pie(221, 698, 97, locationSlices)}
          <text class="label end" x="148" y="603">10M</text><text class="label end" x="148" y="618">(36.15%)</text>
          <path class="leader" d="M151 606h12l5 8M234 797l2 9h11" />
          <text class="label" x="250" y="810">18M (63.85%)</text>
          ${legend(377, 679, "location_type", [["Rural", "#6b2229"], ["Urban", "#e06a74"]])}
        </svg>
      </figure>
      <figure class="v4">
        <figcaption>Sum of number_of_people_served by type_of_water_source</figcaption>
        <svg width="530" height="290" viewBox="536 548 530 290">
          ${pie(724, 699, 104, sourceSlices)}
          <path class="leader" d="M790 616l6-8h12M681 586h11l3 9M632 613h11l8 9M617 768h12l8-6M698 816h11l1-11" />
          <text class="label" x="811" y="613">12M (43.24%)</text>
          <text class="label end" x="678" y="591">2M (8.55%)</text>
          <text class="label end" x="629" y="611">4M</text><text class="label end" x="629" y="626">(13.75%)</text>
          <text class="label end" x="614" y="765">5M</text><text class="label end" x="614" y="780">(16.94%)</text>
          <text class="label end" x="694" y="820">5M (17.52%)</text>
          ${legend(906, 646, "type_of_water_source", [["shared_tap", "#6b2229"], ["well", "#666666"], ["tap_in_home", "#808080"], ["tap_in_home_broken", "#b3b3b3"], ["river", "#e68f96"]])}
        </svg>
      </figure>
      <div class="page-edge"></div>
    </div>`;
  }

  private renderFilters() {
    return html`<aside class="filters">
      <div class="filters-head">
        <div class="head-row">
          ${icon(svg`<path stroke-width="1.800" d="M0 2h16M3 7h11M5 12h6" />`, 16, 14)}
          <h2>Filters</h2>
          <button class="eye" aria-label="Show filters">${icon(svg`<path stroke="#777" stroke-width="1.500" d="M1 5c3-5 8-5 11 0" /><circle cx="6.500" cy="6" r="2" stroke-width="2" />`, 13, 11)}</button>
          <button aria-label="Collapse filters">${icon(doubleChevron, 11, 11)}</button>
        </div>
        <label class="filter-search">${icon(lens, 15, 15)}<input type="search" aria-label="Search filters" placeholder="Search" /></label>
      </div>
      <section class="filter-set">
        <div class="set-row"><span>Filters on this page</span><button aria-label="More options">...</button></div>
        <div class="card"><h3>visit_count</h3><span>is 1</span></div>
        <button class="drop">Add data fields here</button>
      </section>
      <section class="filter-set">
        <div class="set-row"><span>Filters on all pages</span><button aria-label="More options">...</button></div>
        <button class="drop">Add data fields here</button>
      </section>
    </aside>`;
  }

  private renderVisualizations() {
    return html`<aside class="pane">
      <div class="head-row"><h2>Visualizations</h2><button aria-label="Collapse visualizations">${icon(doubleChevron, 11, 11)}</button></div>
      <div class="build">
        <h3>Build visual</h3>
        <div class="modes">
          <button class="on" aria-label="Build visual">${icon(svg`<path stroke="#b0b0b0" stroke-width="1.500" d="M1 1h24" /><path fill="#22a98a" stroke="#d0d0d0" stroke-width="1.300" stroke-dasharray="2 2" d="M1 6h28v9H1zM1 20h28v9H1z" />`, 30, 30)}</button>
          <button aria-label="Format page">${icon(svg`<path stroke="#b8b8b8" stroke-width="1.500" d="M6 29H1V1h12l9 10" /><path fill="#ddd" stroke="none" d="M13 1l9 10h-9z" /><path stroke="#b8b8b8" stroke-width="1.500" d="M30 10c-6 3-11 8-13 12l3 3c4-3 8-8 10-15zM17 22c-4-1-6 1-6 4 0 2-2 3-4 3 5 2 13 1 13-4" />`, 30, 30)}</button>
        </div>
      </div>
      <svg class="caret" viewBox="0 0 225 11" preserveAspectRatio="xMinYMin" fill="none" stroke="#777" aria-hidden="true"><path d="M0 10.500h20l10-9 10 9h185" /></svg>
      <div class="gallery">
        ${gallery.map(([name, g]) => html`<button aria-label=${name} title=${name}>${icon(g, 24, 24)}</button>`)}
      </div>
      <div class="wells">
        <div class="name">Values</div>
        <button class="well">Add data fields here</button>
        <h3>Drill through</h3>
        <label class="row">Cross-report<span class="switch"><input type="checkbox" />Off</span></label>
        <label class="row">Keep all filters<span class="switch yes"><input type="checkbox" checked />On</span></label>
        <button class="well black">Add drill-through fields here</button>
      </div>
    </aside>`;
  }

  render() {
    const menus = ["File", "Home", "Insert", "Modeling", "View", "Optimize", "Help"];
    const pages = ["Page 1", "Mapping The Crisis", "National Level", "Queue TIme Analysis", "Page 2"];
    return html`
      <header class="titlebar">
        <div class="quick">
          <button aria-label="Save">${icon(svg`<path stroke-width="1.800" d="M1 1h16l2 2v16H4l-3-3zM5 1v8h10V1M5 19v-6h9v6M9 15v4" />`, 20, 20)}</button>
          <button class="dim" aria-label="Undo">${icon(svg`<path stroke-width="1.600" d="M1 1v7h7M1 8c5-8 15-7 15 0 0 5-4 8-8 11" />`, 18, 20)}</button>
          <button class="dim" aria-label="Redo">${icon(svg`<path stroke-width="1.600" d="M17 1v7h-7M17 8C12 0 2 1 2 8c0 5 4 8 8 11" />`, 18, 20)}</button>
          <button class="doc">Maji Ndogo Part 1 • Last saved: 9/29/2025 at 4:35 PM ${icon(svg`<path stroke-width="1.300" d="M1 1h9L5.500 6z" />`, 11, 12)}</button>
        </div>
        <label class="top-search">${icon(svg`<circle cx="13" cy="7" r="6" stroke-width="1.500" /><path stroke-width="1.500" d="M9 12l-8 8" />`, 20, 20)}<input type="search" aria-label="Search" placeholder="Search" /></label>
        <div class="window">
          <button class="signin">Sign in ${icon(svg`<circle cx="12.500" cy="12.500" r="12.500" fill="#383838" stroke="none" /><circle cx="12.500" cy="7" r="3.500" /><path stroke-width="1.300" d="M6 13h13c0 10-13 10-13 0z" />`, 25, 25)}</button>
          <div class="controls">
            <button aria-label="Minimize">${icon(svg`<path stroke-width="1.300" d="M0 6.500h13" />`, 13, 14)}</button>
            <button aria-label="Restore">${icon(svg`<path stroke-width="1.500" d="M1 4h9v10H1zM4 4c0-2 1-3 3-3h3c2 0 3 1 3 3v5c0 2-1 3-2 3" />`, 14, 14)}</button>
            <button aria-label="Close">${icon(svg`<path stroke-width="1.500" d="M1 1l12 12M13 1L1 13" />`, 14, 14)}</button>
          </div>
        </div>
      </header>
      <div class="menubar">
        <nav>${menus.map((m) => html`<button class=${classMap({ menu: true, on: m === this.menu })} @click=${() => (this.menu = m)}>${m}</button>`)}</nav>
        <button class="share">${icon(svg`<path stroke-width="1.500" d="M6 3H1v14h15v-5M5 13c0-5 3-7 8-7V2l6 6-6 6v-4c-4 0-6 1-8 3z" />`, 19, 19)}<span>Share</span>${icon(svg`<path stroke-width="1.600" d="M1 1l6 6 6-6" />`, 14, 8)}</button>
      </div>
      ${this.renderRibbon()}
      <main class="work">
        <nav class="rail">
          <button class="on" aria-label="Report view">${icon(svg`<path stroke-width="1.500" d="M1 0v16h17" /><path fill="#888" stroke-width="1.200" d="M4 14V3h3v11zM9 14V7h3v7zM14 14V1h2v13z" />`, 18, 18)}</button>
          <button aria-label="Table view">${icon(svg`<path stroke-width="1.600" d="M1 1h19v18H1zM1 4h19M1 9h19M1 14h19M7 4v15M14 4v15" />`, 21, 20)}</button>
          <button aria-label="Model view">${icon(svg`<path stroke-width="1.500" d="M1 7h9v9H1zM1 11h9M14 1h9v9h-9zM14 4h9M14 14h9v9h-9zM14 17h9M6 7V3h8M6 16v4h8" />`, 24, 24)}</button>
          <button aria-label="DAX query view">${icon(svg`<path stroke-width="1.400" d="M6 13V3c0-1 1-2 2-2h7l4 5v9c0 2 0 4-2 5M14 1v5h5M21 8v8c0 3-1 4-3 5" /><text x="0" y="21" font-size="8" font-weight="700" fill="currentColor" stroke="none">DAX</text>`, 22, 22)}</button>
          <button aria-label="TMDL view">${icon(svg`<path stroke-width="1.400" d="M5 11V3c0-1 1-2 2-2h7l5 5v5M14 1v5h5" /><text x="0" y="21" font-size="8" font-weight="700" fill="currentColor" stroke="none">TMDL</text>`, 23, 22)}</button>
        </nav>
        <div class="center">
          <div class="stage">${this.renderCanvas()}${this.renderFilters()}</div>
          <div class="pagebar">
            <div class="views">
              <button class="desk" aria-label="Desktop layout">${icon(svg`<path stroke-width="2" d="M4 1h12c1 0 2 1 2 2v10c0 1-1 2-2 2H4c-1 0-2-1-2-2V3c0-1 1-2 2-2zM7 15v3M13 15v3M5 19h10" />`, 20, 20)}</button>
              <button class="phone" aria-label="Mobile layout">${icon(svg`<path stroke-width="2" d="M3 1h8c1 0 2 1 2 2v18c0 1-1 2-2 2H3c-1 0-2-1-2-2V3c0-1 1-2 2-2zM5 20h4" />`, 14, 24)}</button>
              <button class="step first" aria-label="Previous pages">${icon(svg`<path stroke-width="1.300" d="M6 1v10L1 6z" />`, 7, 12)}</button>
              <button class="step" aria-label="Next pages">${icon(svg`<path stroke-width="1.300" d="M1 1v10l5-5z" />`, 7, 12)}</button>
            </div>
            ${pages.map((p) => html`<button class=${classMap({ tab: true, on: p === this.current })} @click=${() => (this.current = p)}>${p}</button>`)}
            <button class="add" aria-label="New page">+</button>
          </div>
        </div>
        ${this.renderVisualizations()}
        <aside class="pane">
          <div class="head-row"><h2>Data</h2><button aria-label="Collapse data">${icon(doubleChevron, 11, 11)}</button></div>
          <label class="data-search">${icon(svg`<circle cx="8" cy="8" r="7" stroke-width="1.500" /><path stroke-width="1.500" d="M13 13l5 5" />`, 19, 19)}<input type="search" aria-label="Search data" placeholder="Search" /></label>
          <button class="tree">${icon(svg`<path stroke-width="1.600" d="M1 1l5 5-5 5" />`, 7, 12)}${icon(svg`<path stroke-width="1.400" d="M3 1h10c1 0 2 1 2 2v10c0 1-1 2-2 2H3c-1 0-2-1-2-2V3c0-1 1-2 2-2zM1 5.500h14M1 10.500h14M5.500 1v14M10.500 1v14" />`, 16, 16)}<span>Md_summary (1)</span></button>
        </aside>
      </main>
      <footer class="status">
        <span>Page 1 of 5</span>
        <div class="zoom"><button aria-label="Zoom out">-</button><input type="range" aria-label="Zoom" min="10" max="190" value="74" /><button aria-label="Zoom in">+</button></div>
        <span class="pct">74%</span>
        <button aria-label="Fit to page">${icon(svg`<path stroke-width="1.500" d="M3 1h13c1 0 2 1 2 2v7c0 1-1 2-2 2H3c-1 0-2-1-2-2V3c0-1 1-2 2-2zM4 6V4h3M12 4h3v2M4 8v2M4 10h2M15 8v2h-2" />`, 19, 13)}</button>
      </footer>
      <div class="activate"><strong>Activate Windows</strong>Go to Settings to activate Windows.</div>
      <div class="mark"><b lang="ar">نفذلي</b><i>nafezly.com</i></div>
    `;
  }
}
